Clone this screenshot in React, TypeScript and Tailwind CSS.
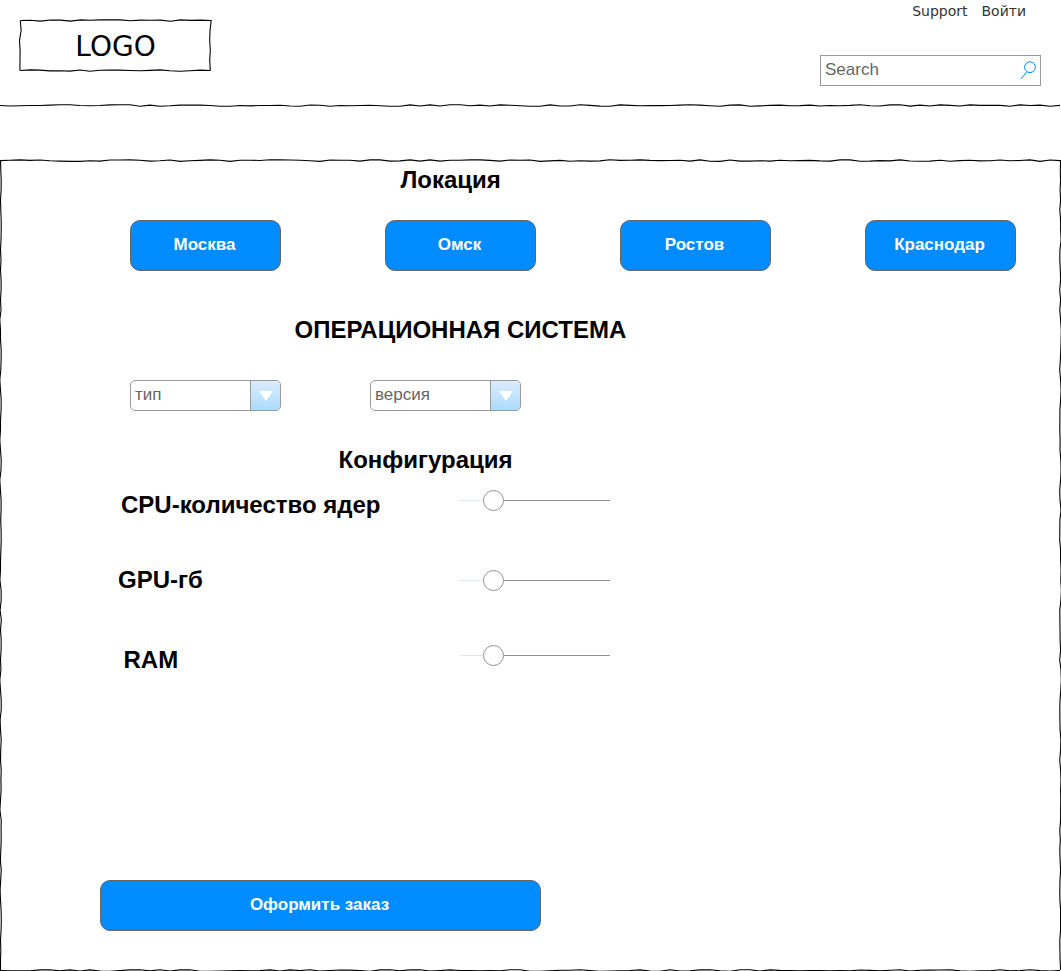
import React from "react";

const STEP = 10;

// Deviations from the centre line, in tenths of a pixel, one for each 10px step.
const HEADER_RULE = [
  0, 5, 2, 0, 0, -4, -7, -7, 0, 3, 0, -6, -7, -7, 7, -4, 7, 3, -4, -4, -4, 0, 7, 7, 0, 4, 0, 0, -3, 5, 7, -5, -3, 7, 0, 3,
  0, -2, 2, 7, 8, -6, 5, -6, 5, -7, -7, 2, -4, 5, -6, -3, 2, 7, 8, -6, 5, 5, -8, -1, 6, 8, -6, -1, 2, 1, 1, 0, -4, -8,
  -4, 2, 8, -4, -6, 8, 4, -1, -4, 2, 1, -4, 5, 0, 3, -1, -8, 2, 5, -6, -7, 6, -4, 5, -6, -1, 5, -6, -1, -1, -1, 7, -6, 0,
  -4, 7, -1,
];
const PANEL_TOP = [
  0, -3, -7, -2, -6, 1, 5, 8, 8, 1, 5, -6, -6, -7, -4, 5, 1, -6, 8, 1, -2, -7, -4, 8, -4, -4, -1, -8, -7, -6, -3, 1, 8, -6,
  -4, -4, 5, -7, -7, 5, 3, -7, 5, -7, 5, -4, -4, -7, -7, -2, 5, -6, -4, -6, 8, 3, -2, 7, 2, 5, 3, -8, -2, -3, -7, -2, 0,
  -1, -3, 5, -7, 7, 8, -6, 5, 5, 1, 5, -3, 1, 0, -2, 3, 5, -7, -7, 7, 5, 0, 3, -7, 4, 6, 5, -4, 6, 0, -4, 3, 1, -6, 2, -1,
  -7, 8, -6, 0,
];
const PANEL_BOTTOM = [
  0, 2, 2, 2, -7, -8, 3, -7, 4, -7, 5, 6, 0, -7, -8, 3, -8, 4, -7, -8, 6, 7, 5, 3, -1, 2, 0, -7, 4, -7, 0, -8, 5, -1, -6,
  -5, 0, 6, -7, -8, 2, -7, -8, 5, 0, -7, -1, 0, 3, -1, 2, -8, -8, 6, 7, 2, -3, -4, -8, 0, 6, 4, 1, -1, -7, 4, 8, -8, 4, 1,
  -7, -8, 2, 7, -8, -8, 5, -7, -2, -1, 2, 0, 0, 1, -1, 2, -6, -2, 3, -3, -8, 5, -4, -5, -6, -7, 1, 6, 2, 2, -8, 3, 0, -8,
  0, 4, 0,
];
const PANEL_LEFT = [
  0, 3, 7, 6, 0, 3, 7, 7, 5, 0, 5, 0, 6, 6, 0, 5, -7, 0, 0, 7, 6, 3, -7, 0, 7, 6, 0, 0, -7, 0, 7, 5, -7, -1, 6, 6, 2, 6, 7,
  4, 0, 0, -6, 6, 7, -4, 8, 0, 7, 6, 0, 4, -7, 0, 7, 7, -4, 0, 7, 2, 0, 7, 4, 6, 0, -6, 7, 6, 7, 3, -1, 7, 2, -4, 0, 6, 8,
  6, 0, 3, 0, 0,
];
const PANEL_RIGHT = [
  0, -3, 0, -5, 0, -8, 0, 0, 5, -7, -8, -3, 0, -9, 0, -8, 0, 7, 5, 2, -3, -9, 0, 5, 0, -7, -7, -8, -5, -6, 2, 5, 0, -9, -6,
  4, -7, -8, -9, 0, 0, 5, 2, 8, 3, -8, -7, -6, -5, 0, -9, 4, 7, 2, -6, -8, -7, -5, 3, 0, -9, 0, 4, 0, 2, 0, 0, -8, -3, -8,
  -5, 0, -6, -8, -7, 0, 0, 0, -8, -7, -5, 0,
];
const LOGO_TOP = [0, -3, 6, -5, -4, 6, -6, -2, -6, -6, -6, 3, -4, -3, -4, 7, -6, -1, -4, 0];
const LOGO_BOTTOM = [0, -6, -4, 4, 2, 6, -5, 7, -3, -4, -4, 0, 3, -1, -6, 2, 7, 2, -4, 0];

function across(y: number, deviations: number[], end: number) {
  return deviations.map((d, i) => `${Math.min(i * STEP, end)},${y + d / 10}`).join(" ");
}

function down(x: number, deviations: number[], end: number) {
  return deviations.map((d, i) => `${x + d / 10},${Math.min(i * STEP, end)}`).join(" ");
}

function Stroke({ points }: { points: string }) {
  return <polyline points={points} fill="none" stroke="#000" strokeWidth="1.1" />;
}

function Logo() {
  return (
    <div className="relative flex h-[52px] w-[193px] items-center justify-center pt-[3px]">
      <svg className="absolute inset-0 overflow-visible" width="193" height="52" viewBox="0 0 193 52" aria-hidden="true">
        <g transform="translate(1.5 1.5)">
          <Stroke points={LOGO_TOP.map((d, i) => `${i === 19 ? 190.7 : i * STEP},${d / 10}`).join(" ")} />
          <Stroke points={LOGO_BOTTOM.map((d, i) => `${i === 19 ? 190 : i * STEP - 0.5},${50 + d / 10}`).join(" ")} />
          <Stroke points="-0.2,0 0.6,10 -1,20 -0.4,30 -0.5,40 -0.6,50" />
          <Stroke points="190.7,-0.2 189.5,10 189.2,20 189.8,30 189.2,40 189.8,50" />
        </g>
      </svg>
      <span className="font-['DejaVu_Sans',sans-serif] text-[28px] leading-[32px]">LOGO</span>
    </div>
  );
}

function SearchBox() {
  return (
    <div className="flex h-[31px] w-[221px] items-center justify-between border border-[#999] pl-1 pr-1">
      <span className="pb-[2px] text-[17px] leading-5 text-[#666]">Search</span>
      <svg width="16" height="19" viewBox="0 0 16 19" fill="none" stroke="#008cff" aria-hidden="true">
        <circle cx="10" cy="6.2" r="5.4" />
        <path d="M6.8 10.6 1 18" />
      </svg>
    </div>
  );
}

function Header() {
  return (
    <header>
      <div className="flex h-[100px] justify-between pl-[19px] pr-5">
        <div className="pt-[19px]">
          <Logo />
        </div>
        <div className="flex flex-col items-end">
          <nav className="flex h-[55px] gap-[14px] pr-[15px] font-['DejaVu_Sans',sans-serif] text-[14px] leading-[22px] text-[#333]">
            <a>Support</a>
            <a>Войти</a>
          </nav>
          <SearchBox />
        </div>
      </div>
      <svg className="block" width="1061" height="10" viewBox="0 0 1061 10" aria-hidden="true">
        <Stroke points={across(5.5, HEADER_RULE, 1061)} />
      </svg>
    </header>
  );
}

function BlueButton({ label, className }: { label: string; className: string }) {
  return (
    <button
      className={`h-[51px] rounded-[10px] border border-[#666] bg-[#008cff] pb-[2px] pr-[2px] text-[17px] font-bold leading-5 text-white ${className}`}
    >
      {label}
    </button>
  );
}

function Select({ label }: { label: string }) {
  return (
    <div className="flex h-[31px] w-[151px] overflow-hidden rounded-[5px] border border-[#999]">
      <span className="flex-1 pl-1 pt-1 text-[17px] leading-5 text-[#666]">{label}</span>
      <span className="flex w-[30px] items-center justify-center border-l border-[#999] bg-linear-to-b from-[#dcecff] to-[#aadcff]">
        <svg width="14" height="10" viewBox="0 0 14 10" aria-hidden="true">
          <path d="M0 0H14L7 10Z" fill="#fff" />
        </svg>
      </span>
    </div>
  );
}

function Slider() {
  return (
    <div className="flex h-[21px] w-[150px] items-center">
      <span className="h-px w-[23px] bg-[#dcebf2]" />
      <span className="h-[21px] w-[21px] rounded-full border border-[#909090] bg-white" />
      <span className="h-px flex-1 bg-[#909090]" />
    </div>
  );
}

function Heading({ label, className }: { label: string; className: string }) {
  return <h2 className={`whitespace-nowrap text-2xl font-bold leading-7 ${className}`}>{label}</h2>;
}

export default function App() {
  return (
    <div className="h-[971px] w-[1061px] overflow-hidden bg-white font-['Liberation_Sans',Arial,sans-serif] text-black">
      <Header />
      <main className="relative mt-[50px] h-[811px]">
        <svg
          className="pointer-events-none absolute inset-0 overflow-visible"
          width="1061"
          height="811"
          viewBox="0 0 1061 811"
          aria-hidden="true"
        >
          <Stroke points={across(0.6, PANEL_TOP, 1060.5)} />
          <Stroke points={across(810.6, PANEL_BOTTOM, 1060.5)} />
          <Stroke points={down(0.5, PANEL_LEFT, 810.5)} />
          <Stroke points={down(1060.6, PANEL_RIGHT, 810.5)} />
        </svg>

        <section className="h-[150px] pt-[6px]">
          <Heading label="Локация" className="ml-[400.5px]" />
          <div className="ml-[130px] mt-[26px] flex">
            <BlueButton label="Москва" className="w-[151px]" />
            <BlueButton label="Омск" className="ml-[104px] w-[151px]" />
            <BlueButton label="Ростов" className="ml-[84px] w-[151px]" />
            <BlueButton label="Краснодар" className="ml-[94px] w-[151px]" />
          </div>
        </section>

        <section className="h-[130px] pt-[6px]">
          <Heading label="ОПЕРАЦИОННАЯ СИСТЕМА" className="ml-[294.5px]" />
          <div className="ml-[130px] mt-[36px] flex gap-[89px]">
            <Select label="тип" />
            <Select label="версия" />
          </div>
        </section>

        <section className="h-[440px] pt-[6px]">
          <Heading label="Конфигурация" className="ml-[338.5px]" />
          <div className="mt-4 flex h-[29px]">
            <Heading label="CPU-количество ядер" className="w-[460px] pl-[121px] pt-[1px]" />
            <Slider />
          </div>
          <div className="mt-[51px] flex h-[29px]">
            <Heading label="GPU-гб" className="w-[460px] pl-[118px] -mt-1" />
            <Slider />
          </div>
          <div className="mt-[46px] flex h-[29px]">
            <Heading label="RAM" className="w-[460px] pl-[123.5px] pt-[1px]" />
            <Slider />
          </div>
        </section>

        <BlueButton label="Оформить заказ" className="ml-[100px] w-[441px]" />
      </main>
    </div>
  );
}
